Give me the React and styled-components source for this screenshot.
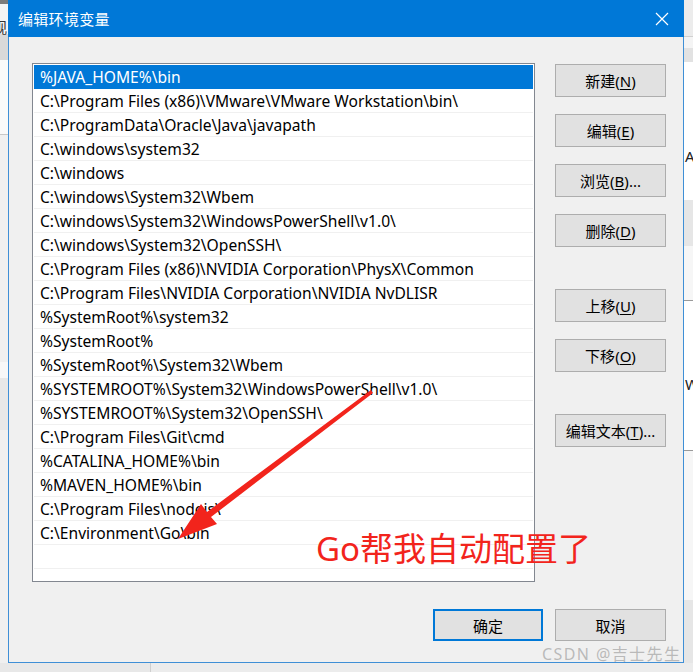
import React from "react";
import styled, { createGlobalStyle } from "styled-components";

const Global = createGlobalStyle`
  html, body { margin: 0; padding: 0; background: #e6e6e6; }
  body { font-family: "Noto Sans", "Noto Sans CJK SC", sans-serif; }
  * { box-sizing: border-box; }
`;

const Page = styled.div`
  position: relative;
  width: 693px;
  height: 672px;
  overflow: hidden;
  display: flex;
  flex-direction: column;
  background: #e4e4e4;
`;

const Top = styled.div`
  display: flex;
  height: 663px;
`;

const LeftStrip = styled.div`
  width: 8px;
  position: relative;
  overflow: hidden;
  background: linear-gradient(
    to bottom,
    #7c7c7c 0px, #7c7c7c 4px,
    #f4f4f4 4px, #f4f4f4 34px,
    #d9d9d9 34px, #d9d9d9 60px,
    #fafafa 60px, #fafafa 134px,
    #c8c8c8 134px, #c8c8c8 135px,
    #f0f0f0 135px, #f0f0f0 362px,
    #f8f8f8 362px, #f8f8f8 378px,
    #e8e8e8 378px, #e8e8e8 430px,
    #f0f0f0 430px
  );
`;

const LeftChar = styled.span`
  position: absolute;
  left: -8px;
  top: 16px;
  font-size: 15px;
  color: #333;
  font-family: "Noto Sans CJK SC", sans-serif;
`;

const RightStrip = styled.div`
  width: 9px;
  position: relative;
  overflow: hidden;
  background: linear-gradient(
    to bottom,
    #ececec 0px, #ececec 36px,
    #d0d0d0 36px, #d0d0d0 37px,
    #f4f4f4 37px, #f4f4f4 48px,
    #e2e2e2 48px, #e2e2e2 62px,
    #ffffff 62px, #ffffff 200px,
    #e6e6e6 200px, #e6e6e6 246px,
    #f6f6f6 246px, #f6f6f6 300px,
    #9a9a9a 300px, #9a9a9a 301px,
    #ffffff 301px, #ffffff 450px,
    #9a9a9a 450px, #9a9a9a 451px,
    #f6f6f6 451px, #f6f6f6 600px,
    #e6e6e6 600px
  );
`;

const StripLetter = styled.span`
  position: absolute;
  left: 1px;
  top: ${(p) => p.$top}px;
  font-size: 15px;
  color: #222;
`;

const BottomStrip = styled.div`
  flex: 1;
  background: linear-gradient(to right, #e8e8e8 0 150px, #cfcfcf 150px 151px, #ececec 151px);
`;

const Dialog = styled.div`
  width: 676px;
  display: flex;
  flex-direction: column;
  background: #f0f0f0;
  border: 1px solid #3f8fd6;
  border-top: none;
`;

const TitleBar = styled.div`
  height: 37px;
  margin: 0 -1px;
  background: #0078d7;
  display: flex;
  align-items: center;
  justify-content: space-between;
  padding: 0 15px 0 10px;
`;

const Title = styled.span`
  color: #ffffff;
  font-size: 15px;
  font-family: "Noto Sans CJK SC", sans-serif;
  letter-spacing: 0.3px;
`;

const CloseIcon = styled.svg`
  width: 14px;
  height: 14px;
  display: block;
`;

const Body = styled.div`
  flex: 1;
  display: flex;
  flex-direction: column;
  padding: 26px 17px 0 23px;
`;

const Main = styled.div`
  display: flex;
  gap: 20px;
  align-items: flex-start;
`;

const List = styled.div`
  width: 503px;
  height: 519px;
  background: #ffffff;
  border: 1px solid #828790;
  padding: 1px;
  display: flex;
  flex-direction: column;
  overflow: hidden;
`;

const Row = styled.div`
  height: 24px;
  flex-shrink: 0;
  display: flex;
  align-items: center;
  padding-left: 6px;
  font-size: 15.6px;
  white-space: nowrap;
  color: ${(p) => (p.$selected ? "#ffffff" : "#000000")};
  background: ${(p) => (p.$selected ? "#0078d7" : "#ffffff")};
  border-bottom: 1px solid ${(p) => (p.$selected ? "#0078d7" : "#f0f0f0")};
`;

const Side = styled.div`
  display: flex;
  flex-direction: column;
  padding-top: 1px;
`;

const Group = styled.div`
  display: flex;
  flex-direction: column;
  gap: 17px;
  margin-bottom: 42px;
`;

const Button = styled.div`
  width: 111px;
  height: 33px;
  background: #e1e1e1;
  border: ${(p) => (p.$default ? "2px solid #0078d7" : "1px solid #adadad")};
  display: flex;
  align-items: center;
  justify-content: center;
  font-size: 15px;
  color: #000;
  font-family: "Noto Sans", "Noto Sans CJK SC", sans-serif;
`;

const Key = styled.span`
  text-decoration: underline;
  text-underline-offset: 2px;
`;

const Footer = styled.div`
  margin-top: auto;
  margin-bottom: 21px;
  display: flex;
  justify-content: flex-end;
  gap: 12px;
`;

const FooterButton = styled(Button)`
  width: ${(p) => (p.$default ? "110px" : "111px")};
  height: 32px;
`;

const Annotation = styled.div`
  position: absolute;
  left: 316px;
  top: 527px;
  font-size: 33px;
  line-height: 44px;
  color: #f2241c;
  font-family: "Noto Sans", "Noto Sans CJK SC", sans-serif;
  white-space: nowrap;
`;

const ArrowSvg = styled.svg`
  position: absolute;
  left: 0;
  top: 0;
  pointer-events: none;
`;

const Watermark = styled.div`
  position: absolute;
  left: 542px;
  top: 641px;
  font-size: 16px;
  color: rgba(130, 130, 130, 0.5);
  font-family: "Noto Sans", "Noto Sans CJK SC", sans-serif;
  white-space: nowrap;
  letter-spacing: 1.4px;
`;

const paths = [
  "%JAVA_HOME%\\bin",
  "C:\\Program Files (x86)\\VMware\\VMware Workstation\\bin\\",
  "C:\\ProgramData\\Oracle\\Java\\javapath",
  "C:\\windows\\system32",
  "C:\\windows",
  "C:\\windows\\System32\\Wbem",
  "C:\\windows\\System32\\WindowsPowerShell\\v1.0\\",
  "C:\\windows\\System32\\OpenSSH\\",
  "C:\\Program Files (x86)\\NVIDIA Corporation\\PhysX\\Common",
  "C:\\Program Files\\NVIDIA Corporation\\NVIDIA NvDLISR",
  "%SystemRoot%\\system32",
  "%SystemRoot%",
  "%SystemRoot%\\System32\\Wbem",
  "%SYSTEMROOT%\\System32\\WindowsPowerShell\\v1.0\\",
  "%SYSTEMROOT%\\System32\\OpenSSH\\",
  "C:\\Program Files\\Git\\cmd",
  "%CATALINA_HOME%\\bin",
  "%MAVEN_HOME%\\bin",
  "C:\\Program Files\\nodejs\\",
  "C:\\Environment\\Go\\bin",
  "",
];

const Label = ({ text, k, after = "" }) => (
  <>
    {text}(<Key>{k}</Key>){after}
  </>
);

export default function App() {
  return (
    <>
      <Global />
      <Page>
        <Top>
          <LeftStrip>
            <LeftChar>观</LeftChar>
          </LeftStrip>
          <Dialog>
            <TitleBar>
              <Title>编辑环境变量</Title>
              <CloseIcon viewBox="0 0 14 14">
                <path d="M1 1 L13 13 M13 1 L1 13" stroke="#ffffff" strokeWidth="1.2" fill="none" />
              </CloseIcon>
            </TitleBar>
            <Body>
              <Main>
                <List>
                  {paths.map((p, i) => (
                    <Row key={i} $selected={i === 0}>
                      {p}
                    </Row>
                  ))}
                </List>
                <Side>
                  <Group>
                    <Button><Label text="新建" k="N" /></Button>
                    <Button><Label text="编辑" k="E" /></Button>
                    <Button><Label text="浏览" k="B" after="..." /></Button>
                    <Button><Label text="删除" k="D" /></Button>
                  </Group>
                  <Group>
                    <Button><Label text="上移" k="U" /></Button>
                    <Button><Label text="下移" k="O" /></Button>
                  </Group>
                  <Group>
                    <Button><Label text="编辑文本" k="T" after="..." /></Button>
                  </Group>
                </Side>
              </Main>
              <Footer>
                <FooterButton $default>确定</FooterButton>
                <FooterButton>取消</FooterButton>
              </Footer>
            </Body>
          </Dialog>
          <RightStrip>
            <StripLetter $top={146}>A</StripLetter>
            <StripLetter $top={374}>W</StripLetter>
          </RightStrip>
        </Top>
        <BottomStrip />
        <ArrowSvg width="693" height="672" viewBox="0 0 693 672">
          <polygon
            points="373,393 211,517 217,524 178,539 201,504 207,512 371,390"
            fill="#f2241c"
          />
        </ArrowSvg>
        <Annotation>Go帮我自动配置了</Annotation>
        <Watermark>CSDN @吉士先生</Watermark>
      </Page>
    </>
  );
}
